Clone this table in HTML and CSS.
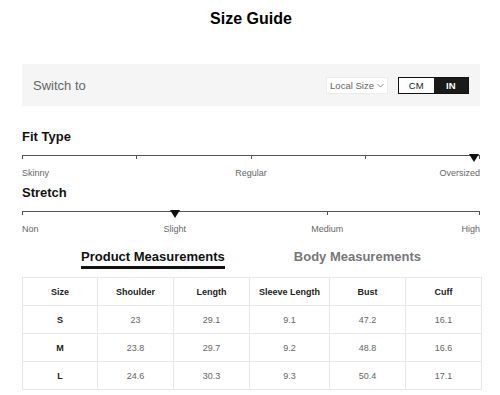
FILE: index.html
```html
<!DOCTYPE html>
<html lang="en">
<head>
  <meta charset="UTF-8">
  <meta name="viewport" content="width=device-width, initial-scale=1.0">
  <title>Size Guide</title>
  <link rel="stylesheet" href="styles.css">
</head>
<body>
  <div class="wrap">
    <h1 class="title">Size Guide</h1>

    <div class="switch_bar">
      <span class="switch_label">Switch to</span>
      <div class="switch_right">
        <div class="local_size">Local Size
          <svg class="chev" width="7" height="5" viewBox="0 0 7 5"><path d="M0.5 1 L3.5 4 L6.5 1" fill="none" stroke="#777" stroke-width="0.9"/></svg>
        </div>
        <div class="unit_toggle">
          <span class="unit">CM</span>
          <span class="unit on">IN</span>
        </div>
      </div>
    </div>

    <div class="scale_block">
      <h2 class="scale_title">Fit Type</h2>
      <div class="track">
        <div class="seg"></div><div class="seg"></div><div class="seg"></div><div class="seg"></div>
        <span class="marker" style="left: 98.7%"></span>
      </div>
      <div class="labels labels_fit">
        <span>Skinny</span><span>Regular</span><span>Oversized</span>
      </div>
    </div>

    <div class="scale_block">
      <h2 class="scale_title">Stretch</h2>
      <div class="track">
        <div class="seg"></div><div class="seg"></div><div class="seg"></div>
        <span class="marker" style="left: 33.3%"></span>
      </div>
      <div class="labels labels_stretch">
        <span class="l1">Non</span><span class="l2">Slight</span><span class="l3">Medium</span><span class="l4">High</span>
      </div>
    </div>

    <div class="tabs">
      <span class="tab on">Product Measurements</span>
      <span class="tab">Body Measurements</span>
    </div>

    <table class="size_table">
      <colgroup>
        <col class="c_size"><col class="c_std"><col class="c_std"><col class="c_wide"><col class="c_std"><col class="c_std">
      </colgroup>
      <thead>
        <tr><th>Size</th><th>Shoulder</th><th>Length</th><th>Sleeve Length</th><th>Bust</th><th>Cuff</th></tr>
      </thead>
      <tbody>
        <tr><th>S</th><td>23</td><td>29.1</td><td>9.1</td><td>47.2</td><td>16.1</td></tr>
        <tr><th>M</th><td>23.8</td><td>29.7</td><td>9.2</td><td>48.8</td><td>16.6</td></tr>
        <tr><th>L</th><td>24.6</td><td>30.3</td><td>9.3</td><td>50.4</td><td>17.1</td></tr>
      </tbody>
    </table>
  </div>
</body>
</html>
```

FILE: styles.css
```css
body {
  margin: 0;
  background: #fff;
  font-family: 'Liberation Sans', Arial, sans-serif;
  color: #111;
}

.wrap {
  width: 458px;
  margin-left: 22px;
  padding-top: 9px;
}

.title {
  margin: 0;
  font-size: 16px;
  line-height: 19px;
  font-weight: 700;
  text-align: center;
  color: #000;
}

.switch_bar {
  margin-top: 36px;
  height: 42px;
  background: #f5f5f5;
  display: flex;
  align-items: center;
  justify-content: space-between;
  padding: 0 11px;
}
.switch_label {
  font-size: 13px;
  color: #666;
}
.switch_right {
  display: flex;
  align-items: center;
  gap: 10px;
}
.local_size {
  height: 17px;
  width: 62px;
  box-sizing: border-box;
  background: #fff;
  border: 1px solid #ececec;
  font-size: 9.5px;
  color: #666;
  display: flex;
  align-items: center;
  justify-content: center;
  gap: 3px;
}
.unit_toggle {
  display: flex;
  border: 1px solid #111;
  height: 17px;
  width: 71px;
  box-sizing: border-box;
}
.unit {
  flex: 1;
  display: flex;
  align-items: center;
  justify-content: center;
  font-size: 9.5px;
  background: #fff;
  color: #222;
}
.unit.on {
  background: #1a1a1a;
  color: #fff;
  font-weight: 700;
}

.scale_block {
  margin-top: 23px;
}
.scale_block + .scale_block {
  margin-top: 6px;
}
.scale_title {
  margin: 0;
  font-size: 13px;
  line-height: 16px;
  font-weight: 700;
  color: #111;
}
.track {
  position: relative;
  display: flex;
  margin-top: 10px;
}
.seg {
  flex: 1;
  height: 3px;
  border-top: 1px solid #555;
  border-left: 1px solid #555;
}
.seg:last-of-type {
  border-right: 1px solid #555;
}
.marker {
  position: absolute;
  top: -1px;
  width: 0;
  height: 0;
  border-left: 5px solid transparent;
  border-right: 5px solid transparent;
  border-top: 8px solid #111;
  transform: translateX(-50%);
}
.labels {
  margin-top: 9px;
  font-size: 9px;
  line-height: 11px;
  color: #666;
  display: grid;
}
.labels_fit {
  grid-template-columns: 1fr 1fr 1fr;
}
.labels_fit span:nth-child(2) {text-align: center;}
.labels_fit span:nth-child(3) {text-align: right;}
.labels_stretch {
  grid-template-columns: repeat(6, 1fr);
}
.labels_stretch .l1 {grid-column: 1 / 2;}
.labels_stretch .l2 {grid-column: 2 / 4; text-align: center;}
.labels_stretch .l3 {grid-column: 4 / 6; text-align: center;}
.labels_stretch .l4 {grid-column: 6 / 7; text-align: right;}

.tabs {
  margin-top: 14px;
  display: flex;
  justify-content: center;
  gap: 69px;
}
.tab {
  font-size: 13px;
  line-height: 16px;
  font-weight: 700;
  color: #777;
  padding-bottom: 1px;
}
.tab.on {
  color: #111;
  border-bottom: 3px solid #111;
}

.size_table {
  margin-top: 8px;
  width: 100%;
  table-layout: fixed;
  border-collapse: collapse;
  font-size: 9px;
}
.size_table .c_size {width: 75px;}
.size_table .c_std {width: 76px;}
.size_table .c_wide {width: 80px;}
.size_table th, .size_table td {
  border: 1px solid #e8e8e8;
  height: 27px;
  padding: 0;
  text-align: center;
}
.size_table th {
  font-weight: 700;
  color: #222;
}
.size_table td {
  color: #666;
}
```
